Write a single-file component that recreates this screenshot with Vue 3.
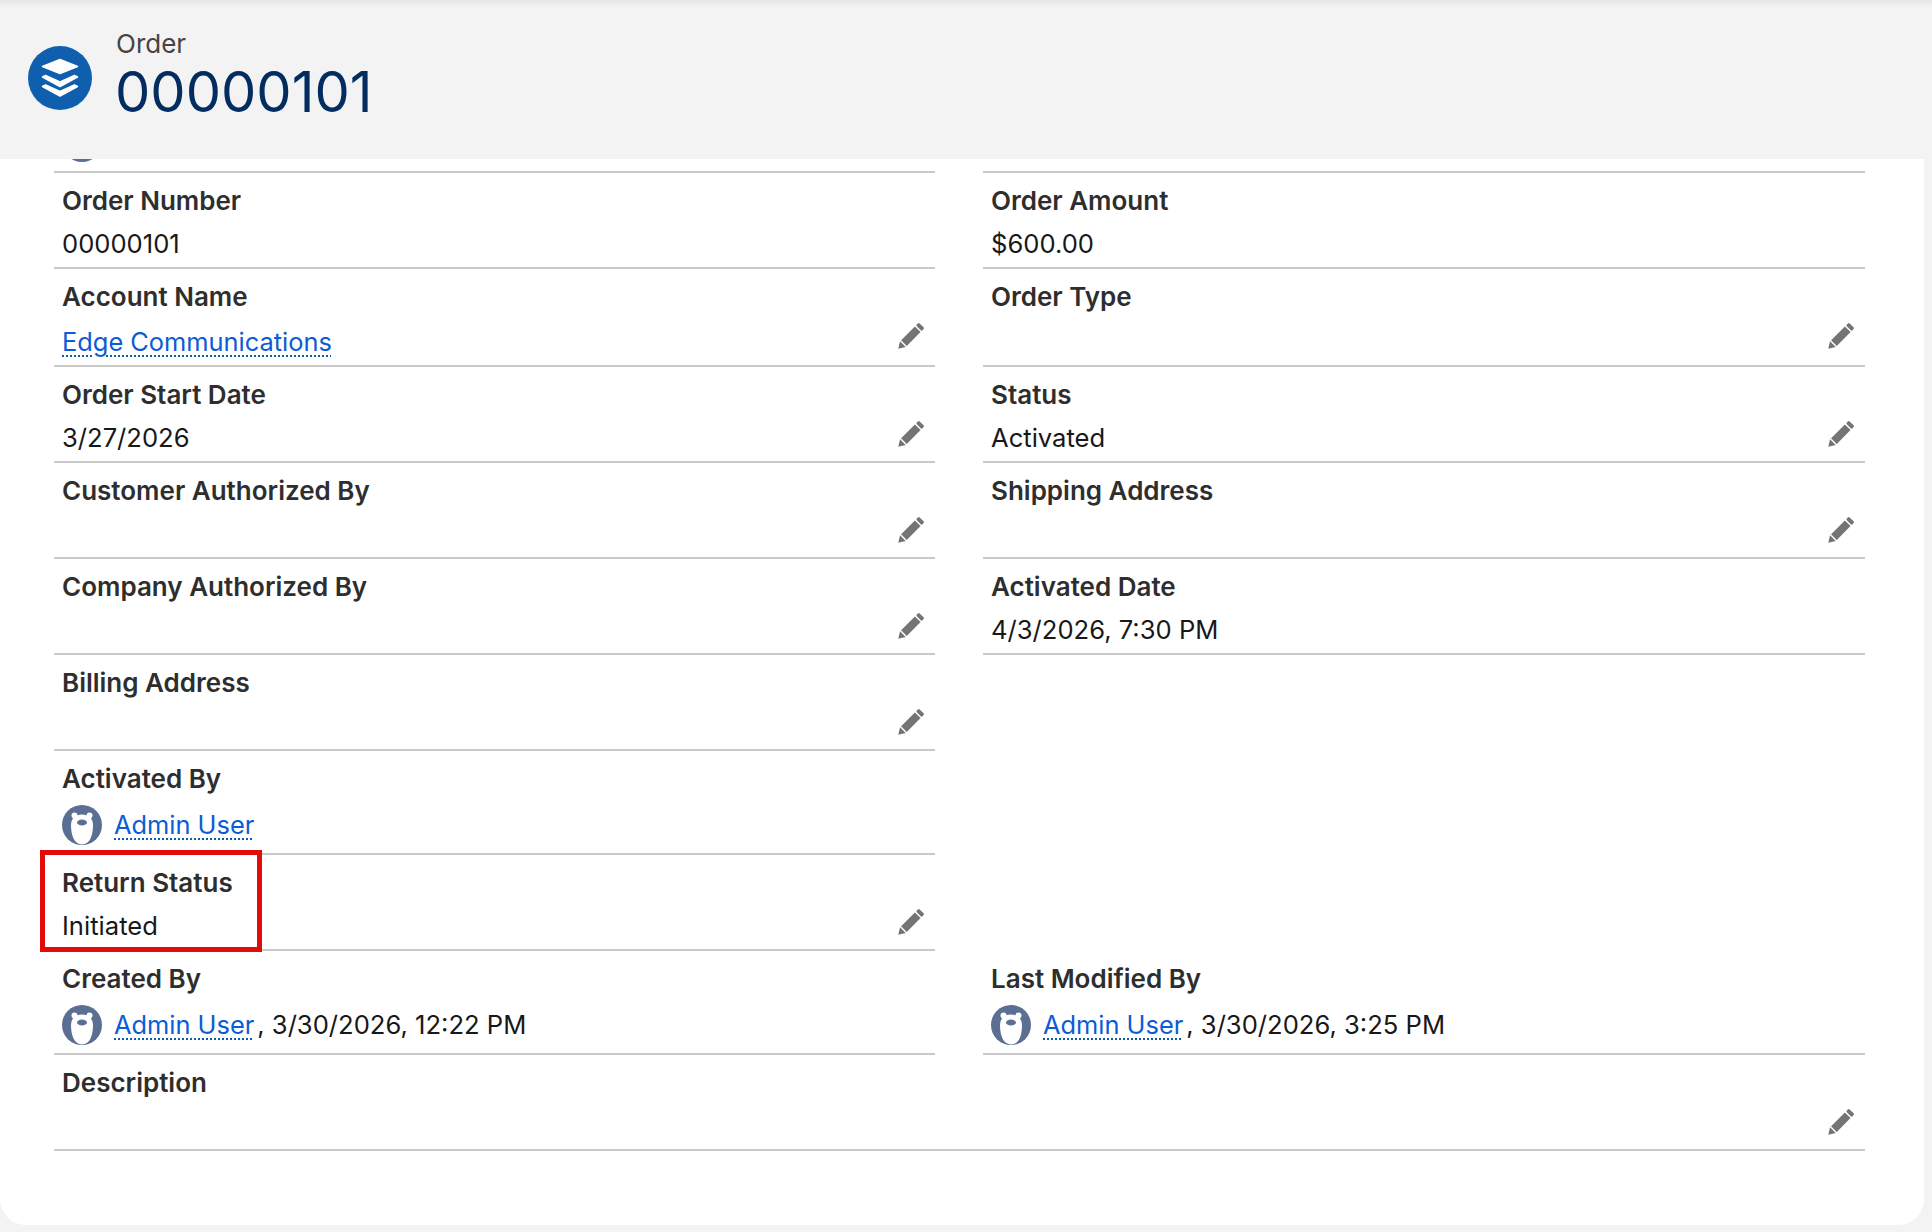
<script setup>
const fields = [
  { label: 'Order Number', value: '00000101' },
  { label: 'Order Amount', value: '$600.00' },
  { label: 'Account Name', link: 'Edge Communications', edit: true },
  { label: 'Order Type', edit: true },
  { label: 'Order Start Date', value: '3/27/2026', edit: true },
  { label: 'Status', value: 'Activated', edit: true },
  { label: 'Customer Authorized By', edit: true },
  { label: 'Shipping Address', edit: true },
  { label: 'Company Authorized By', edit: true },
  { label: 'Activated Date', value: '4/3/2026, 7:30 PM' },
  { label: 'Billing Address', edit: true },
  { blank: true },
  { label: 'Activated By', user: 'Admin User' },
  { blank: true },
  { label: 'Return Status', value: 'Initiated', edit: true, marked: true },
  { blank: true },
  { label: 'Created By', user: 'Admin User', stamp: '3/30/2026, 12:22 PM' },
  { label: 'Last Modified By', user: 'Admin User', stamp: '3/30/2026, 3:25 PM' },
  { label: 'Description', edit: true, wide: true }
]
</script>

<template>
  <div class="page">
    <header class="head">
      <span class="head_icon">
        <svg viewBox="0 0 64 64" width="64" height="64">
          <circle cx="32" cy="32" r="32" fill="#0f5fae" />
          <g fill="#fff" stroke="#fff" stroke-width="1.5" stroke-linejoin="round">
            <path d="M32 13.5 L49.5 20.5 L32 27.5 L14.5 20.5 Z" />
            <path d="M14.5 31 L17.5 29.5 L32 36 L46.5 29.5 L49.5 31 L32 40.5 Z" />
            <path d="M14.5 40.5 L17.5 39 L32 45.5 L46.5 39 L49.5 40.5 L32 50 Z" />
          </g>
        </svg>
      </span>
      <div class="head_text">
        <div class="head_type">Order</div>
        <div class="head_title">00000101</div>
      </div>
    </header>

    <main class="card">
      <div class="grid">
        <div class="field peek">
          <svg class="avatar" viewBox="0 0 40 40" width="40" height="40">
            <circle cx="20" cy="20" r="20" fill="#5a6f92" />
          </svg>
        </div>
        <div class="field peek"></div>

        <template v-for="f in fields" :key="f.label">
          <div v-if="f.blank" class="blank"></div>
          <div v-else class="field" :class="{ wide: f.wide }">
            <div v-if="f.marked" class="marker"></div>
            <div class="field_main">
              <div class="label">{{ f.label }}</div>
              <div v-if="f.user" class="value user_line">
                <svg class="avatar" viewBox="0 0 40 40" width="40" height="40">
                  <circle cx="20" cy="20" r="20" fill="#5a6f92" />
                  <circle cx="12.5" cy="10.5" r="3" fill="#fff" />
                  <circle cx="27.5" cy="10.5" r="3" fill="#fff" />
                  <path d="M20 9.5 C26 9.5 31 13 31 20 C31 30 28 39.5 20 39.5 C12 39.5 9 30 9 20 C9 13 14 9.5 20 9.5 Z" fill="#fff" />
                  <ellipse cx="20" cy="17.5" rx="5" ry="3" fill="#5a6f92" />
                </svg>
                <a class="link">{{ f.user }}</a>
                <span v-if="f.stamp" class="stamp">, {{ f.stamp }}</span>
              </div>
              <div v-else-if="f.link" class="value link_line"><a class="link">{{ f.link }}</a></div>
              <div v-else class="value">{{ f.value }}</div>
            </div>
            <svg v-if="f.edit" class="pencil" viewBox="0 0 28 28" width="28" height="28">
              <g fill="#747474" transform="rotate(45 14 14)">
                <rect x="10" y="-1" width="8" height="4" rx="1.2" />
                <rect x="10" y="4.5" width="8" height="19.5" />
                <path d="M10 25.5 H18 L14 32 Z" />
              </g>
            </svg>
          </div>
        </template>
      </div>
    </main>
  </div>
</template>

<style scoped>
.page {
  height: 1232px;
  background-color: #f3f3f3;
  font-family: Inter, "Liberation Sans", sans-serif;
  overflow: hidden;
}

.head {
  height: 159px;
  box-sizing: border-box;
  display: flex;
  align-items: center;
  gap: 24px;
  padding-left: 28px;
  background: linear-gradient(#e6e6e6, #f3f3f3 8px);
}

.head_icon {
  display: flex;
  margin-bottom: 3px;
}

.head_text {
  padding-bottom: 10px;
}

.head_type {
  font-size: 26px;
  line-height: 34px;
  color: #444;
}

.head_title {
  margin-left: -1px;
  font-size: 56px;
  line-height: 62px;
  color: #032d60;
}

.card {
  height: 1066px;
  margin-right: 8px;
  box-sizing: border-box;
  padding: 0 59px 0 54px;
  background-color: #fff;
  border-radius: 0 0 26px 26px;
}

.grid {
  display: grid;
  grid-template-columns: 881px 882px;
  column-gap: 48px;
}

.field {
  position: relative;
  display: flex;
  justify-content: space-between;
  box-sizing: border-box;
  padding: 0 10px 6px 8px;
  border-bottom: 2px solid #c9c9c9;
}

.field.wide {
  grid-column: 1 / -1;
}

.field.peek {
  height: 14px;
  padding: 0;
  overflow: hidden;
}

.peek .avatar {
  margin: -37px 0 0 8px;
}

.label {
  padding-top: 13px;
  margin-bottom: 11px;
  font-size: 26px;
  line-height: 30px;
  font-weight: 600;
  color: #2e2e2e;
}

.value {
  min-height: 34px;
  font-size: 25.6px;
  line-height: 34px;
  color: #181818;
}

.link_line {
  margin-top: 2px;
  padding-top: 1px;
  line-height: 35px;
  min-height: 35px;
}

.user_line {
  display: flex;
  align-items: center;
  gap: 12px;
  min-height: 40px;
  padding: 0 0 2px;
}

.stamp {
  margin-left: -9px;
}

.link {
  color: #0b5cd5;
  font-size: 25.4px;
  text-decoration: underline dotted #0b5cab;
  text-decoration-thickness: 2px;
  text-underline-offset: 4px;
}

.pencil {
  flex: none;
  margin-top: 53px;
}

.marker {
  position: absolute;
  left: -14px;
  top: -5px;
  width: 222px;
  height: 102px;
  box-sizing: border-box;
  border: 5.5px solid #e30a0a;
  pointer-events: none;
}
</style>

<style>
html, body {
  margin: 0;
  background-color: #f3f3f3;
}
</style>
